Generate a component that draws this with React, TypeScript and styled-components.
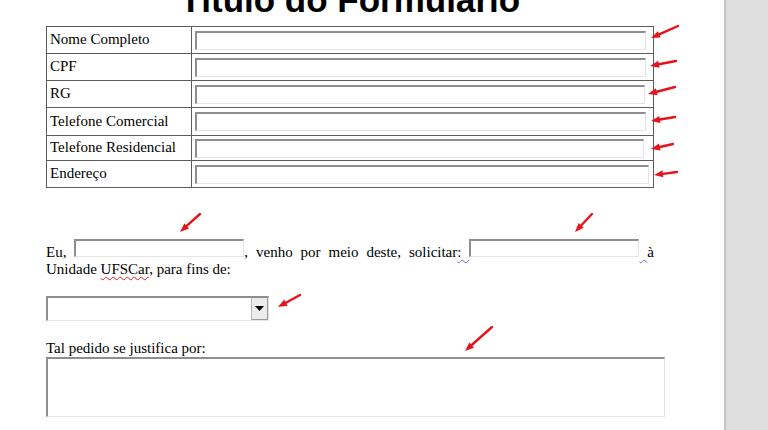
import React from "react";
import styled, { createGlobalStyle } from "styled-components";

const GlobalStyle = createGlobalStyle`
  html, body {
    margin: 0;
    padding: 0;
    background: #ffffff;
  }
  body {
    font-family: "Liberation Serif", "Times New Roman", serif;
    color: #000000;
    overflow: hidden;
  }
`;

const Screen = styled.div`
  position: relative;
  display: flex;
  width: 768px;
  height: 430px;
  overflow: hidden;
`;

const Page = styled.div`
  flex: none;
  width: 724px;
  padding-left: 46px;
  box-sizing: border-box;
  background: #ffffff;
`;

const Gutter = styled.div`
  flex: 1;
  background: #dedede;
  border-left: 2px solid #c6c6c6;
`;

const Content = styled.div`
  width: 608px;
`;

const Title = styled.h1`
  margin: -20px 0 0;
  font-family: "Liberation Sans", Arial, sans-serif;
  font-size: 35px;
  font-weight: bold;
  line-height: 40px;
  text-align: center;
`;

const FormTable = styled.table`
  width: 608px;
  margin-top: 6px;
  border-collapse: collapse;
  font-size: 15px;
`;

const Row = styled.tr<{ $h: number }>`
  height: ${(p) => p.$h}px;
`;

const LabelCell = styled.td`
  width: 145px;
  box-sizing: border-box;
  padding: 0 4px 1px 3px;
  border: 1px solid #5c5c5c;
  white-space: nowrap;
`;

const FieldCell = styled.td`
  padding: 0 3px;
  border: 1px solid #5c5c5c;
`;

const inset = `
  box-sizing: border-box;
  border-top: 2px solid #8e8e8e;
  border-left: 2px solid #8e8e8e;
  border-right: 1px solid #e4e4e4;
  border-bottom: 1px solid #e4e4e4;
  background: #ffffff;
`;

const TextField = styled.input<{ $w: number }>`
  ${inset}
  display: block;
  width: ${(p) => p.$w}px;
  height: 19px;
  margin: 0;
  padding: 0;
  outline: none;
`;

const Paragraph = styled.p`
  margin: 51px 0 0;
  font-size: 15px;
  line-height: 17px;
  text-align: justify;
`;

const InlineField = styled.span`
  ${inset}
  display: inline-block;
  width: 170px;
  height: 18px;
`;

const Misspelled = styled.span`
  text-decoration: underline wavy #e02020;
  text-decoration-thickness: 1px;
  text-underline-offset: 2px;
`;

const GrammarMark = styled.span`
  text-decoration: underline wavy #6a6ae0;
  text-decoration-thickness: 1px;
  text-underline-offset: 2px;
`;

const Dropdown = styled.div`
  ${inset}
  display: flex;
  justify-content: flex-end;
  width: 223px;
  height: 25px;
  margin-top: 18px;
`;

const DropButton = styled.div`
  display: flex;
  align-items: center;
  justify-content: center;
  width: 15px;
  background: #ececec;
  border-left: 1px solid #b8b8b8;
  border-right: 1px solid #9a9a9a;
  border-bottom: 1px solid #9a9a9a;
`;

const Caption = styled.div`
  margin-top: 19px;
  font-size: 15px;
  line-height: 17px;
`;

const Justification = styled.div`
  ${inset}
  width: 619px;
  height: 60px;
`;

const Overlay = styled.svg`
  position: absolute;
  top: 0;
  left: 0;
  pointer-events: none;
`;

const rows = [
  { label: "Nome Completo", h: 27, w: 451 },
  { label: "CPF", h: 27, w: 451 },
  { label: "RG", h: 27, w: 450 },
  { label: "Telefone Comercial", h: 28, w: 451 },
  { label: "Telefone Residencial", h: 25, w: 449 },
  { label: "Endereço", h: 27, w: 454 },
];

// tail -> head
const arrows = [
  [678, 26, 651, 38],
  [676, 61, 650, 66],
  [675, 87, 648, 94],
  [675, 117, 651, 121],
  [673, 144, 651, 149],
  [677, 172, 654, 175],
  [200, 214, 180, 232],
  [592, 214, 575, 232],
  [300, 295, 278, 307],
  [492, 327, 465, 351],
];

const Arrow = ({ a }: { a: number[] }) => {
  const [x1, y1, x2, y2] = a;
  const ang = Math.atan2(y2 - y1, x2 - x1);
  const len = 9;
  const half = 3.5;
  const bx = x2 - Math.cos(ang) * len;
  const by = y2 - Math.sin(ang) * len;
  const px = -Math.sin(ang) * half;
  const py = Math.cos(ang) * half;
  return (
    <g>
      <line x1={x1} y1={y1} x2={bx} y2={by} stroke="#e4141c" strokeWidth={2.4} strokeLinecap="round" />
      <polygon points={`${x2},${y2} ${bx + px},${by + py} ${bx - px},${by - py}`} fill="#e4141c" />
    </g>
  );
};

export default function App() {
  return (
    <>
      <GlobalStyle />
      <Screen>
        <Page>
          <Content>
            <Title>Título do Formulário</Title>
            <FormTable>
              <tbody>
                {rows.map((r) => (
                  <Row key={r.label} $h={r.h}>
                    <LabelCell>{r.label}</LabelCell>
                    <FieldCell>
                      <TextField $w={r.w} readOnly />
                    </FieldCell>
                  </Row>
                ))}
              </tbody>
            </FormTable>
            <Paragraph>
              Eu, <InlineField />, venho por meio deste, solicitar<GrammarMark>: </GrammarMark>
              <InlineField />
              <GrammarMark> </GrammarMark>à Unidade <Misspelled>UFSCar</Misspelled>, para fins de:
            </Paragraph>
            <Dropdown>
              <DropButton>
                <svg width="9" height="5" viewBox="0 0 9 5">
                  <polygon points="0,0 9,0 4.5,5" fill="#000" />
                </svg>
              </DropButton>
            </Dropdown>
            <Caption>Tal pedido se justifica por:</Caption>
            <Justification />
          </Content>
        </Page>
        <Gutter />
        <Overlay width={768} height={430} viewBox="0 0 768 430">
          {arrows.map((a, i) => (
            <Arrow key={i} a={a} />
          ))}
        </Overlay>
      </Screen>
    </>
  );
}
